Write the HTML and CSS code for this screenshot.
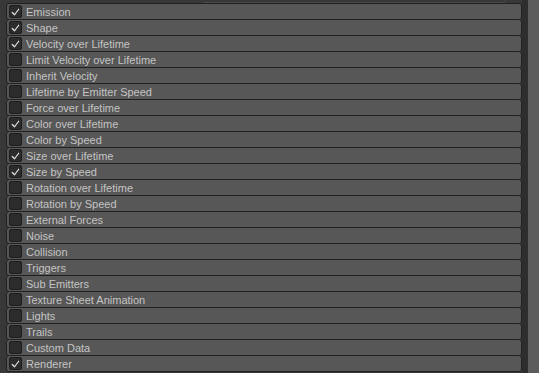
FILE: index.html
```html
<!DOCTYPE html>
<html>
<head>
<meta charset="utf-8">
<link rel="stylesheet" href="styles.css">
</head>
<body>
<div class="panel">
  <div class="content">
    <div class="topstrip"><div class="prev"></div></div>
    <div class="list">
      <div class="row"><span class="cb on"><svg viewBox="0 0 12 12"><polyline points="2.5,6.5 5,9 9.5,3"/></svg></span><span class="label">Emission</span></div>
      <div class="row"><span class="cb on"><svg viewBox="0 0 12 12"><polyline points="2.5,6.5 5,9 9.5,3"/></svg></span><span class="label">Shape</span></div>
      <div class="row"><span class="cb on"><svg viewBox="0 0 12 12"><polyline points="2.5,6.5 5,9 9.5,3"/></svg></span><span class="label">Velocity over Lifetime</span></div>
      <div class="row"><span class="cb"></span><span class="label">Limit Velocity over Lifetime</span></div>
      <div class="row"><span class="cb"></span><span class="label">Inherit Velocity</span></div>
      <div class="row"><span class="cb"></span><span class="label">Lifetime by Emitter Speed</span></div>
      <div class="row"><span class="cb"></span><span class="label">Force over Lifetime</span></div>
      <div class="row"><span class="cb on"><svg viewBox="0 0 12 12"><polyline points="2.5,6.5 5,9 9.5,3"/></svg></span><span class="label">Color over Lifetime</span></div>
      <div class="row"><span class="cb"></span><span class="label">Color by Speed</span></div>
      <div class="row"><span class="cb on"><svg viewBox="0 0 12 12"><polyline points="2.5,6.5 5,9 9.5,3"/></svg></span><span class="label">Size over Lifetime</span></div>
      <div class="row"><span class="cb on"><svg viewBox="0 0 12 12"><polyline points="2.5,6.5 5,9 9.5,3"/></svg></span><span class="label">Size by Speed</span></div>
      <div class="row"><span class="cb"></span><span class="label">Rotation over Lifetime</span></div>
      <div class="row"><span class="cb"></span><span class="label">Rotation by Speed</span></div>
      <div class="row"><span class="cb"></span><span class="label">External Forces</span></div>
      <div class="row"><span class="cb"></span><span class="label">Noise</span></div>
      <div class="row"><span class="cb"></span><span class="label">Collision</span></div>
      <div class="row"><span class="cb"></span><span class="label">Triggers</span></div>
      <div class="row"><span class="cb"></span><span class="label">Sub Emitters</span></div>
      <div class="row"><span class="cb"></span><span class="label">Texture Sheet Animation</span></div>
      <div class="row"><span class="cb"></span><span class="label">Lights</span></div>
      <div class="row"><span class="cb"></span><span class="label">Trails</span></div>
      <div class="row"><span class="cb"></span><span class="label">Custom Data</span></div>
      <div class="row"><span class="cb on"><svg viewBox="0 0 12 12"><polyline points="2.5,6.5 5,9 9.5,3"/></svg></span><span class="label">Renderer</span></div>
    </div>
  </div>
  <div class="gutter"></div>
  <div class="scrollbar"></div>
</div>
</body>
</html>
```
FILE: styles.css
```css
html, body {
  margin: 0;
  padding: 0;
  background: #383838;
  width: 539px;
  height: 373px;
  overflow: hidden;
}
.panel {
  display: flex;
  height: 373px;
}
.content {
  width: 522px;
  flex: none;
  display: flex;
  flex-direction: column;
}
.topstrip {
  height: 3px;
  display: flex;
  justify-content: flex-end;
  padding-right: 16px;
}
.prev {
  width: 302px;
  height: 2px;
  border-bottom: 1px solid #4a4a4a;
  border-right: 1px solid #4a4a4a;
  border-bottom-right-radius: 2px;
}
.list {
  padding-left: 6px;
  display: flex;
  flex-direction: column;
}
.row {
  box-sizing: border-box;
  height: 17px;
  margin-bottom: -1px;
  border: 1px solid #212121;
  border-radius: 3px;
  background: #575757;
  display: flex;
  align-items: center;
  gap: 4px;
  padding-left: 2px;
}
.cb {
  box-sizing: border-box;
  width: 13px;
  height: 13px;
  flex: none;
  background: #2c2c2c;
  border: 1px solid #1e1e1e;
  border-radius: 2px;
  display: flex;
  align-items: center;
  justify-content: center;
}
.cb svg {
  width: 12px;
  height: 12px;
}
.cb svg polyline {
  fill: none;
  stroke: #e8e8e8;
  stroke-width: 1.3;
  stroke-linecap: round;
  stroke-linejoin: round;
}
.label {
  font-family: "Liberation Sans", Arial, sans-serif;
  font-size: 11px;
  color: #c4c4c4;
  white-space: nowrap;
  line-height: 14px;
}
.gutter {
  width: 6px;
  flex: none;
  background: #2d2d2d;
}
.scrollbar {
  flex: 1;
  background: #5c5c5c;
}
```
